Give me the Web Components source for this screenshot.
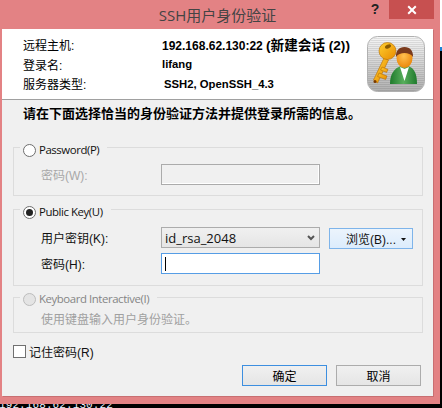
<!DOCTYPE html>
<html><head><meta charset="utf-8">
<style>
html,body{margin:0;padding:0;width:442px;height:408px;overflow:hidden;background:#fff}
body{font:12px "Liberation Sans","Noto Sans CJK SC",sans-serif;color:#000}
</style></head><body>
<ssh-desktop>
<ssh-window title="SSH用户身份验证">
<ssh-info slot="head"></ssh-info>
<ssh-prompt>请在下面选择恰当的身份验证方法并提供登录所需的信息。</ssh-prompt>
<ssh-group label="Password(P)" h="49" top="0" pad="16" lt="-5">
  <ssh-field label="密码(W):" disabled type="input-disabled"></ssh-field>
</ssh-group>
<ssh-group label="Public Key(U)" h="77" checked top="13" pad="17" lt="-5">
  <ssh-field label="用户密钥(K):" type="select" value="id_rsa_2048"></ssh-field>
  <ssh-field label="密码(H):" type="input-focus" style="margin-top:5px"></ssh-field>
</ssh-group>
<ssh-group label="Keyboard Interactive(I)" h="36" disabled top="11" pad="15" lt="-6">
  <ssh-note>使用键盘输入用户身份验证。</ssh-note>
</ssh-group>
<ssh-remember>记住密码(R)</ssh-remember>
<ssh-actions></ssh-actions>
</ssh-window>
<ssh-behind>192.168.62.130:22</ssh-behind>
</ssh-desktop>
<script>
function def(name,html){customElements.define(name,class extends HTMLElement{
  connectedCallback(){ if(this.shadowRoot)return; const r=this.attachShadow({mode:'open'}); r.innerHTML=typeof html==='function'?html(this):html; }
});}
const LATIN='"Open Sans","Noto Sans CJK SC",sans-serif';
def('ssh-desktop',`<style>:host{display:block;width:442px;height:408px;position:relative;overflow:hidden;background:#fff}
.blk{position:absolute;left:0;right:0;top:400px;bottom:0;background:#000}
.side{position:absolute;left:440px;top:51px;width:2px;bottom:0;background:#000}
.blue{position:absolute;left:440px;top:47px;width:2px;height:4px;background:#1c84d8}</style>
<div class="blk"></div><div class="side"></div><div class="blue"></div><slot></slot>`);
def('ssh-behind',`<style>:host{position:absolute;left:-1px;top:398px;font:11px "Liberation Mono",monospace;color:#e8f2ff;letter-spacing:.1px;line-height:14px}</style><slot></slot>`);
def('ssh-window',e=>`<style>
:host{position:relative;z-index:1;display:flex;flex-direction:column;width:440px;height:404px;box-sizing:border-box;background:#e38284;padding:0 7px 8px 2px}
.bar{height:29px;flex:none;position:relative;display:flex;justify-content:center;align-items:center;font:15px ${LATIN};color:#444;padding-bottom:1px;box-sizing:border-box}
.help{position:absolute;left:367px;top:0;width:12px;height:19px;font:bold 14px "Liberation Sans",sans-serif;color:#222;line-height:19px;text-align:center}
.close{position:absolute;left:387px;top:0;width:45px;height:19px;background:#c75050;color:#fff;display:flex;align-items:center;justify-content:center}
.client{flex:1;background:#f0f0f0;display:flex;flex-direction:column;min-height:0;box-shadow:1px 1px 0 #c96f72}
</style>
<div class="bar"><span>${e.getAttribute('title')}</span><span class="help">?</span>
<span class="close"><svg width="10" height="10" viewBox="0 0 10 10"><path d="M1.2 1.2 8.8 8.8M8.8 1.2 1.2 8.8" stroke="#fff" stroke-width="2" fill="none"/></svg></span></div>
<div class="client"><slot name="head"></slot><slot></slot></div>`);
def('ssh-info',`<style>:host{display:block;height:71px;flex:none;background:#fff;border-bottom:1px solid #a0a0a0;box-sizing:border-box;position:relative;font-size:12px}
.grid{display:grid;grid-template-columns:139px auto;grid-template-rows:20px 20px 19px;padding:5px 0 0 21px;align-items:center}
.v{font-weight:bold;font-size:11.3px;white-space:nowrap}.s{padding-left:2px}
.ip{font-size:12px}.cjk{font-size:13.6px}
.logo{position:absolute;left:365px;top:7px}
</style>
<div class="grid"><span>远程主机:</span><span class="v ip">192.168.62.130:22 <span class="cjk">(新建会话 (2))</span></span>
<span>登录名:</span><span class="v">lifang</span>
<span>服务器类型:</span><span class="v s">SSH2, OpenSSH_4.3</span></div>
<svg class="logo" width="58" height="56" viewBox="0 0 58 56">
<defs><linearGradient id="g" x1="0" y1="0" x2="0" y2="1"><stop offset="0" stop-color="#f6f6f6"/><stop offset="1" stop-color="#b0b0b0"/></linearGradient>
<pattern id="p" width="3" height="2" patternUnits="userSpaceOnUse"><rect width="3" height="1" fill="#000" opacity=".09"/></pattern>
<linearGradient id="k" x1="0" y1="0" x2="1" y2="1"><stop offset="0" stop-color="#ffd030"/><stop offset="1" stop-color="#e88a00"/></linearGradient>
<linearGradient id="b" x1="0" y1="0" x2="1" y2="0"><stop offset="0" stop-color="#1f7a2c"/><stop offset=".5" stop-color="#58ae5c"/><stop offset="1" stop-color="#1f7a2c"/></linearGradient>
<radialGradient id="f" cx=".45" cy=".4" r=".7"><stop offset="0" stop-color="#ffc050"/><stop offset="1" stop-color="#e87f00"/></radialGradient></defs>
<rect x=".5" y=".5" width="57" height="55" rx="10" fill="url(#g)" stroke="#b0b0b0"/>
<rect x="1" y="1" width="56" height="54" rx="10" fill="url(#p)"/>
<path d="M23 48c0-11 5-16 11-18l3.500 1 3.500-1c6 2 9 7 9 18z" fill="url(#b)"/>
<path d="M33 31l4.500 14 4.500-14-4.500 2z" fill="#fff"/>
<ellipse cx="37.500" cy="22" rx="8" ry="10" fill="url(#f)"/>
<path d="M29 21c-.5-6 3-10 8.500-10s9 4 8.500 10c-2-3-5-4-8.500-4s-6.500 1-8.500 4z" fill="#7a3a1c"/>
<path d="M6.500 44 17 22l4.500 2L10.500 47z" fill="url(#k)" stroke="#b56c00" stroke-width=".6"/>
<path d="M12 37l8 3-1.400 3.500-8-3zM15 31l6 2.400-1.400 3-6-2.400z" fill="url(#k)" stroke="#b56c00" stroke-width=".6"/>
<ellipse cx="20.500" cy="15" rx="8.500" ry="8.500" fill="url(#k)" stroke="#b56c00" stroke-width=".6"/>
<ellipse cx="21" cy="10.500" rx="3.200" ry="1.800" transform="rotate(-25 21 10.500)" fill="#8a5a00"/>
<circle cx="8" cy="45.500" r="1.500" fill="#7a3a00"/>
</svg>`);
def('ssh-prompt',`<style>:host{display:block;box-sizing:border-box;font-weight:bold;font-size:13px;padding:6px 0 0 21px;height:47px;line-height:16px}</style><slot></slot>`);
def('ssh-group',e=>{const h=e.getAttribute('h'),dis=e.hasAttribute('disabled'),ch=e.hasAttribute('checked'),top=e.getAttribute('top');
return `<style>:host{display:block;box-sizing:border-box;height:${h}px;margin:${top}px 10px 0 11px;position:relative;border:1px solid #dcdcdc;padding:${e.getAttribute('pad')}px 0 0 0}
.leg{position:absolute;left:6px;top:${e.getAttribute('lt')}px;background:#f0f0f0;display:flex;align-items:center;gap:3px;padding:0 8px 0 3px;height:14px;font:11.4px/14px ${LATIN};letter-spacing:-.42px;color:${dis?'#858585':'#111'}}
.r{width:13px;height:13px;box-sizing:border-box;border-radius:50%;border:1px solid ${dis?'#bcbcbc':'#6e6e6e'};background:${dis?'#e4e4e4':'#fff'};display:flex;align-items:center;justify-content:center}
.d{width:7px;height:7px;border-radius:50%;background:#222}</style>
<div class="leg"><span class="r">${ch?'<span class="d"></span>':''}</span><span>${e.getAttribute('label')}</span></div><slot></slot>`});
def('ssh-field',e=>{const t=e.getAttribute('type'),dis=e.hasAttribute('disabled'),v=e.getAttribute('value')||'';
let ctl='';
if(t==='input-disabled')ctl='<div class="c dis"></div>';
if(t==='input-focus')ctl='<div class="c foc"><i></i></div>';
if(t==='select')ctl=`<div class="c sel"><span>${v}</span><svg width="8" height="6" viewBox="0 0 8 6"><path d="M1 1l3 3 3-3" stroke="#555" stroke-width="2" fill="none"/></svg></div><ssh-browse></ssh-browse>`;
return `<style>:host{display:flex;align-items:center;height:21px;padding-left:27px;font-size:12px;color:${dis?'#a8a8a8':'#111'};position:relative}
.l{width:120px;flex:none}
.c{box-sizing:border-box;width:159px;height:21px;display:flex;align-items:center;flex:none}
.dis{border:1px solid #ababab;background:#f0f0f0;box-shadow:inset -1px -1px 0 #fff}
.foc{border:1px solid #569de5;background:#fff;padding-left:3px}
.foc i{display:block;width:1px;height:14px;background:#000}
.sel{border:1px solid #acacac;background:linear-gradient(#f0f0f0,#e5e5e5);justify-content:space-between;padding:0 4px 0 3px;font:13px ${LATIN}}
</style><span class="l">${e.getAttribute('label')}</span>${ctl}`});
def('ssh-browse',`<style>:host{display:flex;box-sizing:border-box;width:84px;height:21px;margin:1px 0 0 9px;border:1px solid #7eb4ea;background:linear-gradient(#ecf4fc,#dcecfc);align-items:center;padding-left:16px;font-size:12px;color:#111;position:relative}
svg{position:absolute;right:6px;top:9px}</style>
<span>浏览(B)...</span><svg width="5" height="3" viewBox="0 0 5 3"><path d="M0 0h5L2.5 3z" fill="#111"/></svg>`);
def('ssh-note',`<style>:host{display:block;padding-left:27px;font-size:12px;line-height:14px;color:#a0a0a0}</style><slot></slot>`);
def('ssh-remember',`<style>:host{display:flex;align-items:center;gap:3px;height:14px;margin:11px 0 0 11px;font-size:12px;color:#111}
i{display:block;box-sizing:border-box;width:13px;height:13px;border:1px solid #707070;background:#fff}</style><i></i><slot></slot>`);
def('ssh-actions',`<style>:host{display:flex;justify-content:flex-end;gap:9px;padding:7px 12px 0 0}
b{font-weight:normal;box-sizing:border-box;width:85px;height:21px;display:flex;align-items:center;justify-content:center;font-size:12px;background:linear-gradient(#f0f0f0,#e5e5e5);border:1px solid #acacac}
.d{border-color:#3d8fe0}</style><b class="d">确定</b><b>取消</b>`);
</script>
</body></html>
